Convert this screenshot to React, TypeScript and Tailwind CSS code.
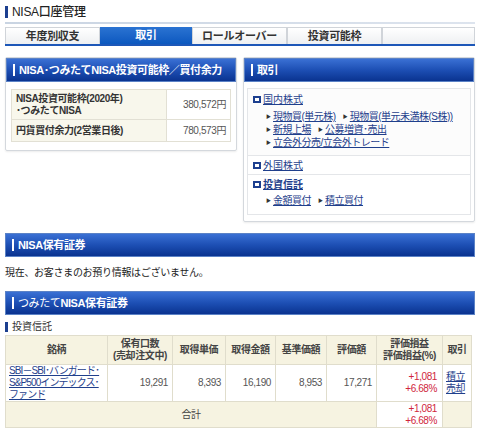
import React from 'react'

const TABS = ['年度別収支', '取引', 'ロールオーバー', '投資可能枠']

function BlueHeader({ title }: { title: React.ReactNode }) {
  return (
    <div className="flex h-[24px] items-center overflow-hidden border border-[#5b82c6] bg-gradient-to-b from-[#3a70d4] via-[#1d4fb4] to-[#0a3390] pl-[6px]">
      <span className="mr-[4px] h-[12px] w-[2px] shrink-0 bg-white" />
      <span className="whitespace-nowrap text-[11px] leading-[14px] font-bold tracking-[-0.4px] text-white">{title}</span>
    </div>
  )
}

function SquareIcon() {
  return (
    <span className="mr-[2px] inline-flex h-[7px] w-[8px] shrink-0 items-center justify-center bg-[#1c3f8f]">
      <span className="h-[3px] w-[4px] bg-white" />
    </span>
  )
}

function SubLink({ children }: { children: React.ReactNode }) {
  return (
    <span className="mr-[7px] inline-flex items-center whitespace-nowrap">
      <span className="mr-[2px] text-[5px] text-[#333]">▶</span>
      <a className="text-[10px] leading-[12px] tracking-[-0.5px] text-[#1f3f8c] underline">{children}</a>
    </span>
  )
}

const cell = 'border border-[#e0ddcc]'

export default function App() {
  return (
    <div
      className="w-[480px] bg-white px-[5px] pb-[4px] text-[11px] text-[#333]"
      style={{ fontFamily: '"Liberation Sans", "Noto Sans CJK JP", sans-serif' }}
    >
      {/* page title */}
      <div className="flex items-center pt-[5px] pb-[3px]">
        <span className="mr-[4px] h-[12px] w-[3px] bg-[#1c3f8f]" />
        <span className="text-[12px] leading-[14px] font-medium tracking-[-0.3px] text-[#222]">NISA口座管理</span>
      </div>
      <div className="h-[2px] bg-gradient-to-r from-[#c9d4e2] to-[#dde4ee]" />

      {/* tabs */}
      <div className="mt-[3px] flex h-[19px] border-b-2 border-[#1d57b8]">
        {TABS.map((t, i) =>
          i === 1 ? (
            <div
              key={t}
              className="flex w-[92px] items-center justify-center bg-gradient-to-b from-[#2a73d2] to-[#0b58bf] text-[11px] font-bold tracking-[-0.3px] text-white"
            >
              {t}
            </div>
          ) : (
            <div
              key={t}
              className="flex w-[95px] items-center justify-center border border-b-0 border-[#d0d4d9] bg-gradient-to-b from-white to-[#eef0f2] text-[11px] font-bold tracking-[-0.3px] text-[#333]"
            >
              {t}
            </div>
          )
        )}
        <div className="flex-1 border border-b-0 border-[#d0d4d9] bg-gradient-to-b from-white to-[#eef0f2]" />
      </div>

      {/* two panels */}
      <div className="mt-[11px] flex gap-[6px]">
        <div className="w-[232px] self-start rounded-[2px] border border-[#d4d8dd] pb-[8px] shadow-[0_1px_2px_rgba(0,0,0,0.08)]">
          <BlueHeader title="NISA･つみたてNISA投資可能枠／買付余力" />
          <div className="px-[5px] pt-[7px]">
            <table className="w-full border-collapse text-[10px] tracking-[-0.4px]">
              <tbody>
                <tr>
                  <td className="h-[30px] w-[155px] border border-[#e2e0d4] bg-[#f8f7ec] px-[4px] font-bold leading-[12px] text-[#333]">
                    NISA投資可能枠(2020年)
                    <br />
                    ･つみたてNISA
                  </td>
                  <td className="border border-[#e2e0d4] px-[4px] text-right text-[#555]">380,572円</td>
                </tr>
                <tr>
                  <td className="h-[22px] border border-[#e2e0d4] bg-[#f8f7ec] px-[4px] font-bold leading-[12px] text-[#333]">
                    円貨買付余力(2営業日後)
                  </td>
                  <td className="border border-[#e2e0d4] px-[4px] text-right text-[#555]">780,573円</td>
                </tr>
              </tbody>
            </table>
          </div>
        </div>

        <div className="w-[232px] rounded-[2px] border border-[#d4d8dd] pb-[6px] shadow-[0_1px_2px_rgba(0,0,0,0.08)]">
          <BlueHeader title="取引" />
          <div className="mx-[3px] mt-[6px] border border-[#e4e6e9]">
            <div className="border-b border-[#e4e6e9] bg-[#fcfcfc] px-[5px] pt-[4px] pb-[6px]">
              <div className="flex h-[13px] items-center">
                <SquareIcon />
                <a className="text-[10px] leading-[13px] text-[#1f3f8c] underline">国内株式</a>
              </div>
              <div className="mt-[5px] flex flex-col gap-[1px] pl-[13px]">
                <div className="flex h-[12px] items-center">
                  <SubLink>現物買(単元株)</SubLink>
                  <SubLink>現物買(単元未満株(S株))</SubLink>
                </div>
                <div className="flex h-[12px] items-center">
                  <SubLink>新規上場</SubLink>
                  <SubLink>公募増資･売出</SubLink>
                </div>
                <div className="flex h-[12px] items-center">
                  <SubLink>立会外分売/立会外トレード</SubLink>
                </div>
              </div>
            </div>
            <div className="flex h-[19px] items-center border-b border-[#e4e6e9] px-[5px]">
              <SquareIcon />
              <a className="text-[10px] leading-[13px] text-[#1f3f8c] underline">外国株式</a>
            </div>
            <div className="px-[5px] pt-[3px] pb-[7px]">
              <div className="flex h-[13px] items-center">
                <SquareIcon />
                <a className="text-[10px] leading-[13px] font-bold text-[#1f3f8c] underline">投資信託</a>
              </div>
              <div className="mt-[4px] flex h-[12px] items-center pl-[13px]">
                <SubLink>金額買付</SubLink>
                <SubLink>積立買付</SubLink>
              </div>
            </div>
          </div>
        </div>
      </div>

      {/* NISA holdings */}
      <div className="mt-[11px]">
        <BlueHeader title="NISA保有証券" />
      </div>
      <p className="mt-[9px] text-[10px] leading-[13px] tracking-[-0.3px] text-[#222]">
        現在、お客さまのお預り情報はございません。
      </p>

      <div className="mt-[12px]">
        <BlueHeader
          title={
            <span>
              <span className="font-normal">つみたて</span>NISA保有証券
            </span>
          }
        />
      </div>

      <div className="mt-[6px] flex h-[12px] items-center">
        <span className="mr-[4px] h-[10px] w-[3px] bg-[#1c3f8f]" />
        <span className="text-[10px] leading-[12px] text-[#333]">投資信託</span>
      </div>

      <table className="mt-[2px] w-[467px] table-fixed border-collapse text-[10px] leading-[12px] tracking-[-0.4px]">
        <thead>
          <tr className="bg-[#f6f3e1] text-[#444]">
            <th className={`h-[29px] w-[102px] font-bold ${cell}`}>銘柄</th>
            <th className={`w-[65px] font-bold ${cell}`}>
              保有口数
              <br />
              (売却注文中)
            </th>
            <th className={`w-[53px] font-bold ${cell}`}>取得単価</th>
            <th className={`w-[50px] font-bold ${cell}`}>取得金額</th>
            <th className={`w-[51px] font-bold ${cell}`}>基準価額</th>
            <th className={`w-[50px] font-bold ${cell}`}>評価額</th>
            <th className={`w-[66px] font-bold ${cell}`}>
              評価損益
              <br />
              評価損益(%)
            </th>
            <th className={`font-bold ${cell}`}>取引</th>
          </tr>
        </thead>
        <tbody>
          <tr className="text-[#555]">
            <td className={`h-[36px] px-[3px] ${cell}`}>
              <a className="break-all tracking-[-0.9px] text-[#1f3f8c] underline">
                SBI－SBI･バンガード･S&amp;P500インデックス･ファンド
              </a>
            </td>
            <td className={`px-[4px] text-right ${cell}`}>19,291</td>
            <td className={`px-[4px] text-right ${cell}`}>8,393</td>
            <td className={`px-[4px] text-right ${cell}`}>16,190</td>
            <td className={`px-[4px] text-right ${cell}`}>8,953</td>
            <td className={`px-[4px] text-right ${cell}`}>17,271</td>
            <td className={`px-[5px] text-right text-[#d0263c] ${cell}`}>
              +1,081
              <br />
              +6.68%
            </td>
            <td className={`px-[3px] ${cell}`}>
              <a className="text-[#1f3f8c] underline">積立</a>
              <br />
              <a className="text-[#1f3f8c] underline">売却</a>
            </td>
          </tr>
          <tr>
            <td colSpan={6} className={`h-[26px] bg-[#f6f3e1] text-center text-[#444] ${cell}`}>
              合計
            </td>
            <td className={`px-[5px] text-right text-[#d0263c] ${cell}`}>
              +1,081
              <br />
              +6.68%
            </td>
            <td className={`bg-[#f6f3e1] ${cell}`} />
          </tr>
        </tbody>
      </table>
    </div>
  )
}
